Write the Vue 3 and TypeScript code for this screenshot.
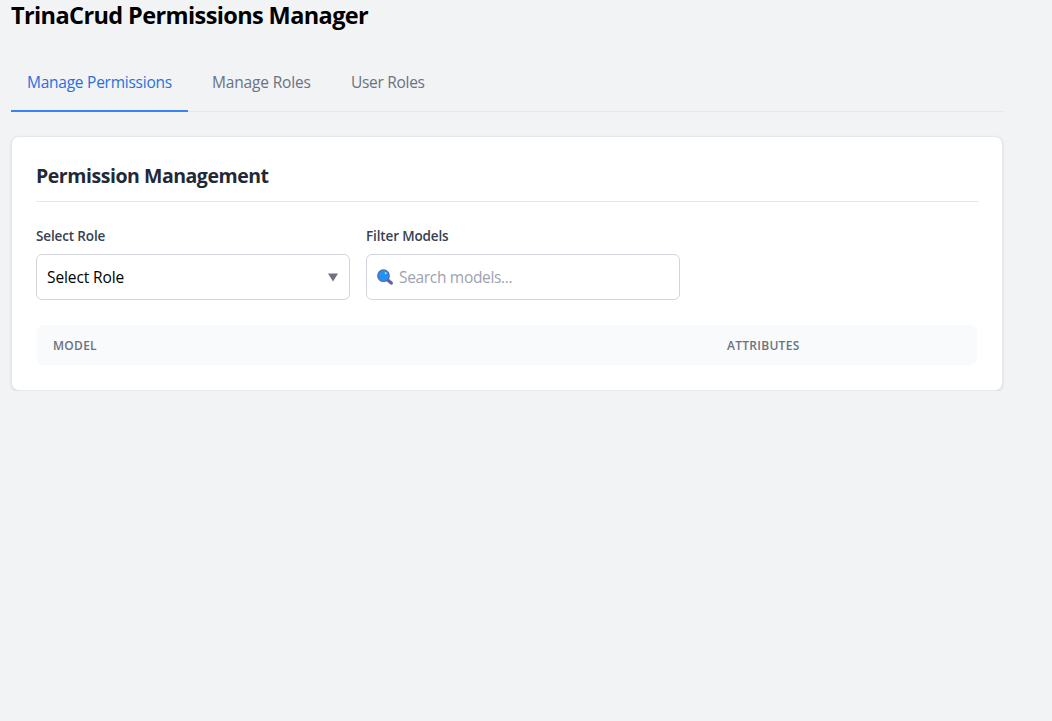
<script setup lang="ts">
import { ref } from 'vue'

const tabs: { id: string; label: string }[] = [
  { id: 'permissions', label: 'Manage Permissions' },
  { id: 'roles', label: 'Manage Roles' },
  { id: 'users', label: 'User Roles' },
]
const active = ref('permissions')
const search = ref('')
</script>

<template>
  <main class="page">
    <h1 class="title">TrinaCrud Permissions Manager</h1>
    <nav class="tabs">
      <button
        v-for="tab in tabs"
        :key="tab.id"
        class="tab"
        :class="[tab.id, { active: active === tab.id }]"
        @click="active = tab.id"
      >{{ tab.label }}</button>
    </nav>
    <section class="card">
      <h2 class="heading">Permission Management</h2>
      <div class="filters">
        <div class="group">
          <label class="label">Select Role</label>
          <div class="field">
            <span class="value">Select Role</span>
            <svg class="arrow" width="10" height="9" viewBox="0 0 10 9"><path d="M0 .5h10L5 8.6z" fill="#6f7080" /></svg>
          </div>
        </div>
        <div class="group">
          <label class="label" for="search">Filter Models</label>
          <div class="field">
            <svg class="lens" width="17" height="17" viewBox="0 0 17 17">
              <path d="M10.4 10.8l3.9 3.3" stroke="#6264a0" stroke-width="3.3" stroke-linecap="round" />
              <circle cx="6.5" cy="6.7" r="5.8" fill="#2490f0" stroke="#5569ab" stroke-width="1.2" />
              <circle cx="8.7" cy="4.1" r=".9" fill="#d8f3ff" />
            </svg>
            <input id="search" v-model="search" class="input" type="text" placeholder="Search models..." />
          </div>
        </div>
      </div>
      <div class="thead">
        <span>Model</span>
        <span>Attributes</span>
      </div>
    </section>
  </main>
</template>

<style>
body {
  background: #f1f3f5;
}
</style>

<style scoped>
* {
  box-sizing: border-box;
}
.page {
  width: 992px;
  margin-left: 11px;
  font-family: "Open Sans", "Noto Sans", sans-serif;
  font-size: 15.5px;
}
.title {
  margin: 0;
  height: 55px;
  font-size: 23.5px;
  line-height: 31px;
  font-weight: 700;
  color: #000;
  letter-spacing: -0.61px;
  white-space: nowrap;
}
.tabs {
  display: flex;
  gap: 8px;
  width: 993px;
  height: 57px;
  border-bottom: 1px solid #e5e7eb;
}
.tab {
  height: 57px;
  padding: 0 0 1px 16px;
  border: 0;
  border-bottom: 2px solid transparent;
  background: none;
  color: #6b7280;
  font: inherit;
  text-align: left;
  letter-spacing: -0.25px;
  white-space: nowrap;
}
.tab.permissions {
  width: 177px;
}
.tab.roles {
  width: 131px;
  letter-spacing: -0.16px;
}
.tab.users {
  width: 106px;
  letter-spacing: -0.3px;
}
.tab.active {
  color: #2970dc;
  border-bottom-color: #3b82f6;
}
.card {
  margin-top: 24px;
  height: 255px;
  padding: 24px;
  border: 1px solid #e5e7eb;
  border-radius: 8px;
  background: #fff;
  box-shadow: 0 1px 3px rgba(0, 0, 0, 0.1);
}
.heading {
  margin: 0;
  height: 41px;
  border-bottom: 1px solid #e5e7eb;
  font-size: 19.5px;
  line-height: 30px;
  font-weight: 700;
  color: #1f2937;
  letter-spacing: -0.46px;
}
.filters {
  display: flex;
  gap: 16px;
  margin-top: 24px;
}
.group {
  width: 314px;
}
.label {
  display: block;
  height: 28px;
  line-height: 20px;
  font-size: 13.5px;
  font-weight: 600;
  color: #374151;
  letter-spacing: -0.14px;
}
.field {
  display: flex;
  align-items: center;
  height: 46px;
  padding: 0 11px 0 10px;
  border: 1px solid #d1d5db;
  border-radius: 6px;
  color: #000;
}
.value {
  flex: 1;
  letter-spacing: -0.1px;
}
.arrow {
  margin-top: 1px;
}
.lens {
  flex: none;
  margin-right: 5px;
}
.input {
  flex: 1;
  min-width: 0;
  padding: 0;
  border: 0;
  outline: 0;
  background: none;
  font: inherit;
  letter-spacing: -0.32px;
}
.input::placeholder {
  color: #9ca3af;
}
.thead {
  display: grid;
  grid-template-columns: 674px 1fr;
  align-items: center;
  height: 40px;
  margin: 25px 1px 0;
  padding: 0 16px;
  border-radius: 6px;
  background: #f9fafb;
  color: #6b7280;
  font-size: 12px;
  font-weight: 600;
  letter-spacing: 0.28px;
  text-transform: uppercase;
}
</style>
